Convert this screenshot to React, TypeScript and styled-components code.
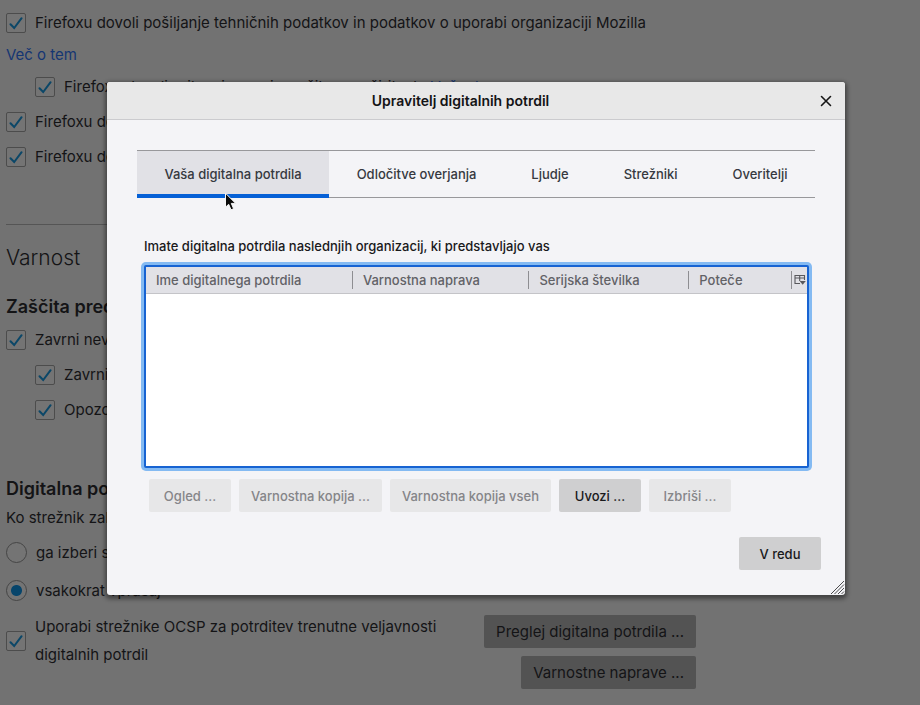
import React, { useId, useState } from "react";
import styled, { createGlobalStyle } from "styled-components";

const GlobalStyle = createGlobalStyle`
  *, *::before, *::after { box-sizing: border-box; }
  body {
    margin: 0;
    background: #727272;
    color: #141416;
    font-family: Inter, "Liberation Sans", sans-serif;
    font-size: 15px;
  }
  button, input { font: inherit; color: inherit; margin: 0; }
`;

/* ---------- Preferences page ---------- */

const Page = styled.main`
  position: relative;
  min-height: 100vh;
  overflow: hidden;
`;

const Preferences = styled.div`
  max-width: 702px;
  padding: 5px 6px 16px;
`;

const OptionRow = styled.div<{ $indent?: boolean; $tall?: boolean }>`
  display: flex;
  align-items: center;
  gap: 9px;
  min-height: ${(p) => (p.$tall ? 38 : 35)}px;
  padding-left: ${(p) => (p.$indent ? 29 : 0)}px;
  white-space: nowrap;
`;

const ControlBox = styled.span`
  display: grid;
  flex: none;
  width: 20px;
  height: 20px;
  > * { grid-area: 1 / 1; }
  > svg { pointer-events: none; }
`;

const CheckInput = styled.input`
  appearance: none;
  width: 20px;
  height: 20px;
  border: 1px solid #4c4c4c;
  border-radius: 2px;
  background: #747474;
`;

const RadioInput = styled.input`
  appearance: none;
  flex: none;
  width: 21px;
  height: 21px;
  border: 1px solid #454545;
  border-radius: 50%;
  background: #747474;
  &:checked {
    background: radial-gradient(circle, #07456b 0 5px, #747474 6px);
  }
`;

const TextLink = styled.a`
  display: block;
  width: max-content;
  line-height: 29px;
  color: #153672;
  text-decoration: none;
`;

const InlineLink = styled.a`
  margin-left: 4px;
  color: #153672;
  text-decoration: none;
`;

const Divider = styled.hr`
  margin: 50px 0 0;
  border: 0;
  border-top: 1px solid #555;
`;

const SectionTitle = styled.h1`
  margin: 17px 0 0;
  font-size: 21px;
  font-weight: 300;
  line-height: 32px;
`;

const GroupTitle = styled.h2<{ $top: number }>`
  margin: ${(p) => p.$top}px 0 3px;
  font-size: 18px;
  font-weight: 600;
  line-height: 24px;
  white-space: nowrap;
`;

const GroupText = styled.p`
  margin: 0 0 3px;
  padding-top: 2px;
  line-height: 24px;
  white-space: nowrap;
`;

const SplitRow = styled.div`
  display: flex;
  align-items: flex-start;
  justify-content: space-between;
  gap: 24px;
  margin-top: 4px;
`;

const WrappedOption = styled.div`
  display: flex;
  align-items: center;
  gap: 9px;
  line-height: 28px;
`;

const PageButtons = styled.div`
  display: flex;
  flex: none;
  flex-direction: column;
  align-items: flex-end;
  gap: 8px;
  padding-top: 2px;
`;

const PageButton = styled.button`
  height: 33px;
  padding: 0 12px;
  border: 0;
  border-radius: 2px;
  background: #535353;
`;

/* ---------- Dialog ---------- */

const Overlay = styled.div`
  position: absolute;
  inset: 0;
  padding: 82px 75px 0 107px;
`;

const DialogFrame = styled.section`
  position: relative;
  border-radius: 3px;
  background: #f4f4f7;
  box-shadow: 0 2px 4px 2px rgba(0, 0, 0, 0.42);
  font-size: 13px;
`;

const DialogHeader = styled.header`
  display: grid;
  grid-template-columns: 1fr 24px;
  align-items: center;
  height: 38px;
  padding-right: 7px;
  border-bottom: 1px solid #cbcbce;
  border-radius: 3px 3px 0 0;
  background: #e8e8e8;
`;

const DialogTitle = styled.h2`
  margin: 0;
  font-size: 14px;
  font-weight: 600;
  text-align: center;
`;

const CloseButton = styled.button`
  display: grid;
  place-items: center;
  height: 28px;
  padding: 0;
  border: 0;
  background: none;
`;

const DialogBody = styled.div`
  padding: 30px 30px 25px;
`;

const TabList = styled.div`
  display: flex;
  height: 48px;
  border-top: 1px solid #98989b;
  border-bottom: 1px solid #98989b;
`;

const Tab = styled.button<{ $active: boolean }>`
  position: relative;
  flex: 1 1 auto;
  margin-bottom: ${(p) => (p.$active ? -1 : 0)}px;
  padding: ${(p) => (p.$active ? "2px" : "0")} 26px 0;
  border: 0;
  border-bottom: ${(p) => (p.$active ? "4px solid #0560d6" : "0")};
  background: ${(p) => (p.$active ? "#e1e1e6" : "transparent")};
  color: #36393f;
  font-weight: 500;
  white-space: nowrap;
`;

const Pointer = styled.svg`
  position: absolute;
  left: 87px;
  top: 41px;
  z-index: 1;
`;

const Panel = styled.div`
  padding: 38px 6px 0 7px;
`;

const PanelText = styled.p`
  margin: 0;
  color: #19191b;
  font-weight: 500;
  line-height: 20px;
`;

const TreeFrame = styled.div`
  height: 203px;
  margin-top: 9px;
  border: 2px solid #1763d2;
  border-radius: 2px;
  background: #fff;
  box-shadow: 0 0 0 3px #84baf2;
`;

const Tree = styled.table`
  width: 100%;
  border-spacing: 0;
  table-layout: fixed;
`;

const Column = styled.col<{ $width: string }>`
  width: ${(p) => p.$width};
`;

const HeadCell = styled.th`
  height: 27px;
  padding: 0;
  border-bottom: 1px solid #c4c4c8;
  background: #e1e1e6;
  color: #626266;
  font-weight: 500;
  text-align: left;
`;

const HeadLabel = styled.div`
  display: flex;
  align-items: center;
  height: 18px;
  padding-left: 10px;
  border-right: 1px solid #8e8e92;
  white-space: nowrap;
`;

const PickerButton = styled.button`
  display: grid;
  place-items: center;
  width: 100%;
  height: 18px;
  padding: 0;
  border: 0;
  background: none;
`;

const ButtonRow = styled.div<{ $end?: boolean }>`
  display: flex;
  flex-wrap: wrap;
  gap: 8px;
  justify-content: ${(p) => (p.$end ? "flex-end" : "flex-start")};
  margin: ${(p) => (p.$end ? "25px -6px 0" : "11px 5px 0")};
`;

const DialogButton = styled.button`
  min-width: 82px;
  height: 33px;
  padding: 0 12px;
  border: 0;
  border-radius: 2px;
  background: #cfcfd0;
  color: #19191b;
  font-weight: 500;
  white-space: nowrap;
  &:disabled {
    background: #e7e7e8;
    color: #858588;
  }
`;

const ResizeGrip = styled.svg`
  position: absolute;
  right: 0;
  bottom: 0;
`;

/* ---------- Parts ---------- */

function CheckControl({ id }: { id: string }) {
  return (
    <ControlBox>
      <CheckInput id={id} type="checkbox" defaultChecked />
      <svg width="20" height="20" viewBox="0 0 20 20" fill="none" aria-hidden="true">
        <path d="M4.5 11.2 8.2 15 15.6 5.2" stroke="#0b4768" strokeWidth="2" strokeLinecap="round" />
      </svg>
    </ControlBox>
  );
}

function CheckOption({ indent, label, children }: { indent?: boolean; label: string; children?: React.ReactNode }) {
  const id = useId();
  return (
    <OptionRow $indent={indent}>
      <CheckControl id={id} />
      <span>
        <label htmlFor={id}>{label}</label>
        {children}
      </span>
    </OptionRow>
  );
}

function RadioOption({ label, checked }: { label: string; checked?: boolean }) {
  const id = useId();
  return (
    <OptionRow $tall>
      <RadioInput id={id} type="radio" name="certificate-choice" defaultChecked={checked} />
      <label htmlFor={id}>{label}</label>
    </OptionRow>
  );
}

const tabs = ["Vaša digitalna potrdila", "Odločitve overjanja", "Ljudje", "Strežniki", "Overitelji"];

const columns = [
  { label: "Ime digitalnega potrdila", width: "31.3%" },
  { label: "Varnostna naprava", width: "26.7%" },
  { label: "Serijska številka", width: "24.2%" },
  { label: "Poteče", width: "15.6%" },
];

function CertificateManager() {
  const [active, setActive] = useState(0);
  return (
    <DialogFrame role="dialog" aria-labelledby="dialog-title">
      <DialogHeader>
        <DialogTitle id="dialog-title">Upravitelj digitalnih potrdil</DialogTitle>
        <CloseButton aria-label="Zapri">
          <svg width="12" height="12" viewBox="0 0 12 12" aria-hidden="true">
            <path d="M1.5 1.5 10.5 10.5M10.5 1.5 1.5 10.5" stroke="#161616" strokeWidth="1.6" strokeLinecap="round" />
          </svg>
        </CloseButton>
      </DialogHeader>
      <DialogBody>
        <TabList role="tablist">
          {tabs.map((tab, i) => (
            <Tab key={tab} role="tab" aria-selected={i === active} $active={i === active} onClick={() => setActive(i)}>
              {tab}
              {i === 0 && (
                <Pointer width="14" height="20" viewBox="0 0 14 20" aria-hidden="true">
                  <path
                    d="M1.5 1.2V15.2L4.7 12.3 7 17.8 9.6 16.7 7.3 11.4H11.7Z"
                    fill="#0a0a0a"
                    stroke="#f7f7f7"
                    strokeWidth="1"
                    strokeLinejoin="round"
                  />
                </Pointer>
              )}
            </Tab>
          ))}
        </TabList>
        <Panel role="tabpanel">
          <PanelText>Imate digitalna potrdila naslednjih organizacij, ki predstavljajo vas</PanelText>
          <TreeFrame>
            <Tree>
              <colgroup>
                {columns.map((c) => (
                  <Column key={c.label} $width={c.width} />
                ))}
                <Column $width="auto" />
              </colgroup>
              <thead>
                <tr>
                  {columns.map((c) => (
                    <HeadCell key={c.label} scope="col">
                      <HeadLabel>{c.label}</HeadLabel>
                    </HeadCell>
                  ))}
                  <HeadCell>
                    <PickerButton aria-label="Izberi stolpce">
                      <svg width="12" height="12" viewBox="0 0 12 12" fill="none" aria-hidden="true">
                        <path d="M6 9.5H1V1.5H10.5V6M1 4H10.5M5.7 1.5V7" stroke="#58585c" strokeWidth="1.1" />
                        <path d="M5.6 7H11.8L8.7 10.8Z" fill="#58585c" />
                      </svg>
                    </PickerButton>
                  </HeadCell>
                </tr>
              </thead>
              <tbody />
            </Tree>
          </TreeFrame>
          <ButtonRow>
            <DialogButton disabled>Ogled ...</DialogButton>
            <DialogButton disabled>Varnostna kopija ...</DialogButton>
            <DialogButton disabled>Varnostna kopija vseh</DialogButton>
            <DialogButton>Uvozi ...</DialogButton>
            <DialogButton disabled>Izbriši ...</DialogButton>
          </ButtonRow>
        </Panel>
        <ButtonRow $end>
          <DialogButton>V redu</DialogButton>
        </ButtonRow>
      </DialogBody>
      <ResizeGrip width="15" height="15" viewBox="0 0 15 15" aria-hidden="true">
        <path d="M1 14 14 1M4.5 14 14 4.5M8 14 14 8M11.5 14 14 11.5" stroke="#4c4c4e" strokeWidth="1" />
      </ResizeGrip>
    </DialogFrame>
  );
}

export default function App() {
  return (
    <Page>
      <GlobalStyle />
      <Preferences>
        <CheckOption label="Firefoxu dovoli pošiljanje tehničnih podatkov in podatkov o uporabi organizaciji Mozilla" />
        <TextLink href="#data">Več o tem</TextLink>
        <CheckOption indent label="Firefoxu dovoli prilagojena priporočila o razširitvah">
          {" "}
          <InlineLink href="#extensions">Več o tem</InlineLink>
        </CheckOption>
        <CheckOption label="Firefoxu dovoli nameščanje in izvajanje raziskav" />
        <CheckOption label="Firefoxu dovoli pošiljanje zaostalih poročil o sesutju" />
        <Divider />
        <SectionTitle>Varnost</SectionTitle>
        <GroupTitle $top={21}>Zaščita pred zavajajočo vsebino in nevarno programsko opremo</GroupTitle>
        <CheckOption label="Zavrni nevarno in zavajajočo vsebino" />
        <CheckOption indent label="Zavrni nevarne prenose" />
        <CheckOption indent label="Opozori na neželeno in nenavadno programsko opremo" />
        <GroupTitle $top={50}>Digitalna potrdila</GroupTitle>
        <GroupText>Ko strežnik zahteva osebno digitalno potrdilo:</GroupText>
        <RadioOption label="ga izberi samodejno" />
        <RadioOption label="vsakokrat vprašaj" checked />
        <SplitRow>
          <WrappedOption>
            <CheckControl id="ocsp" />
            <label htmlFor="ocsp">Uporabi strežnike OCSP za potrditev trenutne veljavnosti digitalnih potrdil</label>
          </WrappedOption>
          <PageButtons>
            <PageButton>Preglej digitalna potrdila ...</PageButton>
            <PageButton>Varnostne naprave ...</PageButton>
          </PageButtons>
        </SplitRow>
      </Preferences>
      <Overlay>
        <CertificateManager />
      </Overlay>
    </Page>
  );
}
